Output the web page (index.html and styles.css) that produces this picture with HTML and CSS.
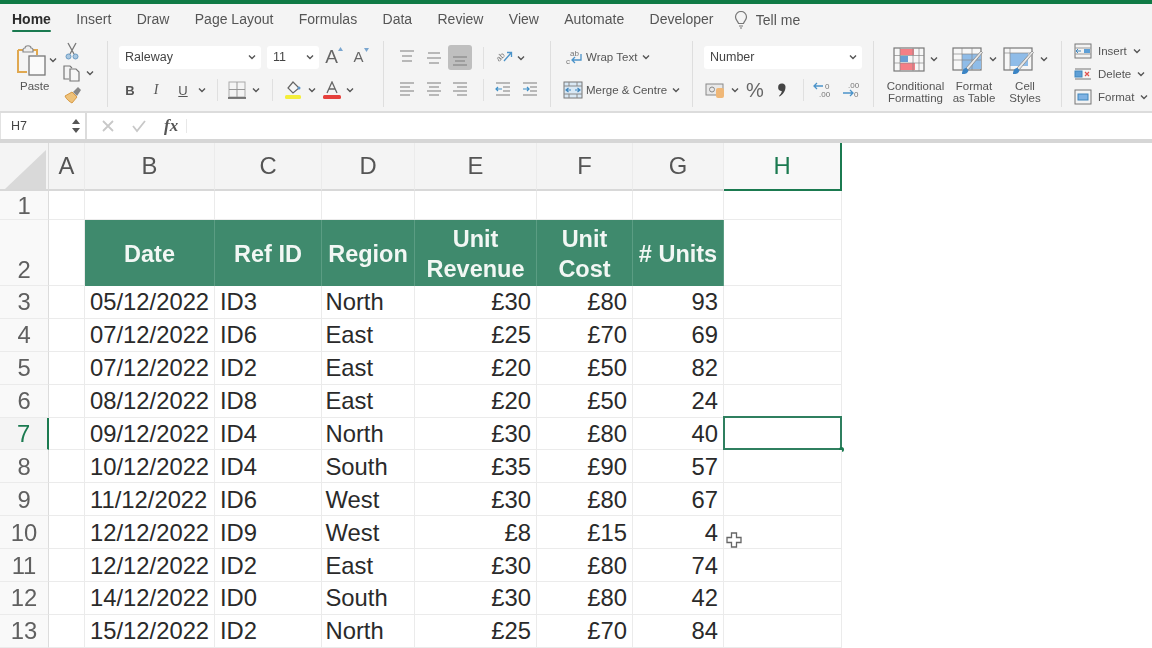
FILE: index.html
```html
<!DOCTYPE html>
<html lang="en">
<head>
<meta charset="utf-8">
<title>Excel</title>
<link rel="stylesheet" href="styles.css">
</head>
<body>
<svg class="defs" width="0" height="0" aria-hidden="true">
  <symbol id="c" viewBox="0 0 8 6"><path d="M1 1.500 4 4.500 7 1.500" fill="none" stroke="#555" stroke-width="1.400"/></symbol>
</svg>
<div class="app">
  <div class="topbar"></div>
  <nav class="tabs">
    <span class="tab active">Home</span><span class="tab">Insert</span><span class="tab">Draw</span><span class="tab">Page Layout</span><span class="tab">Formulas</span><span class="tab">Data</span><span class="tab">Review</span><span class="tab">View</span><span class="tab">Automate</span><span class="tab">Developer</span>
    <span class="tab tell"><svg width="14" height="18" viewBox="0 0 14 18"><path d="M4.500 12.500C4 10 1.500 9 1.500 6a5.500 5.500 0 0 1 11 0c0 3-2.500 4-3 6.500ZM5 15h4M6 17h2" fill="none" stroke="#777" stroke-width="1.200"/></svg>Tell me</span>
  </nav>

  <section class="ribbon">
    <div class="grp g1">
      <div class="paste">
        <div class="paste-icon">
          <svg width="32" height="32" viewBox="0 0 32 32"><path d="M3 6h5M18 6h4v5M3 6v22h9" fill="none" stroke="#e0a850" stroke-width="2"/><path d="M8 6c0-2 2-2 2-2 0-3 6-3 6 0 0 0 2 0 2 2v2H8Z" fill="#eee" stroke="#888" stroke-width="1.200"/><rect x="14" y="12" width="16" height="19" fill="#fafafa" stroke="#777" stroke-width="1.300"/></svg>
          <svg class="caret"><use href="#c"/></svg>
        </div>
        <span class="lbl">Paste</span>
      </div>
      <div class="tools">
        <svg width="14" height="18" viewBox="0 0 14 18"><path d="M3 1 9 12M11 1 5 12" stroke="#777" stroke-width="1.300"/><circle cx="3.500" cy="14.500" r="2.500" fill="#a9c7e0" stroke="#6a9cc4"/><circle cx="10.500" cy="14.500" r="2.500" fill="#a9c7e0" stroke="#6a9cc4"/></svg>
        <div class="tool-copy"><svg width="18" height="18" viewBox="0 0 18 18"><path d="M6 15H1V2h6l2 2" fill="none" stroke="#777" stroke-width="1.200"/><path d="M7 5h6l3 3v9H7Z" fill="#f6f6f6" stroke="#777" stroke-width="1.200"/></svg><svg class="caret"><use href="#c"/></svg></div>
        <svg width="18" height="18" viewBox="0 0 18 18"><path d="M1 10 8 6l5 5-5 6c-2-1-6-4-7-7Z" fill="#efc27a" stroke="#d79a45"/><path d="M9 6l5-5 3 3-4 6Z" fill="#888"/></svg>
      </div>
    </div>

    <div class="grp g2">
      <div class="row r-font">
        <div class="select">Raleway<svg class="caret"><use href="#c"/></svg></div>
        <div class="select">11<svg class="caret"><use href="#c"/></svg></div>
        <span class="grow big">A<svg width="5" height="4" viewBox="0 0 5 4"><path d="M0 4 2.500 0 5 4Z" fill="#7aa6cf"/></svg></span>
        <span class="grow">A<svg width="5" height="4" viewBox="0 0 5 4"><path d="M0 0 2.500 4 5 0Z" fill="#7aa6cf"/></svg></span>
      </div>
      <div class="row r-fmt">
        <b class="fmt">B</b><i class="fmt ital">I</i><u class="fmt">U</u><svg class="caret"><use href="#c"/></svg>
        <span class="vsep"></span>
        <svg width="18" height="18" viewBox="0 0 18 18"><rect x="1" y="1" width="16" height="15" fill="none" stroke="#aaa"/><path d="M9 1v15M1 8.500h16" stroke="#999"/><path d="M0 17h18" stroke="#555" stroke-width="1.500"/></svg>
        <svg class="caret"><use href="#c"/></svg>
        <span class="vsep"></span>
        <svg width="18" height="18" viewBox="0 0 18 18"><path d="M9 1 15 7 9 12 4 7Z" fill="#f5f5f5" stroke="#666" stroke-width="1.200"/><circle cx="15" cy="7" r="1.500" fill="#5e93c4"/><rect x="1" y="14" width="16" height="4" rx="1.500" fill="#f4ee3a"/></svg>
        <svg class="caret"><use href="#c"/></svg>
        <svg width="18" height="18" viewBox="0 0 18 18"><path d="M4 12 9 1l5 11M6 8h6" fill="none" stroke="#666" stroke-width="1.300"/><rect y="14" width="18" height="4" rx="1.500" fill="#e6403c"/></svg>
        <svg class="caret"><use href="#c"/></svg>
      </div>
    </div>

    <div class="grp g3">
      <div class="row r-al1">
        <svg class="lines"><path d="M1 2h14M3 7h10M3 12h10"/></svg>
        <svg class="lines"><path d="M2 4h12M1 9h14M3 14h10"/></svg>
        <span class="on"><svg class="lines"><path d="M1 8h14M3 12h10M1 16h14"/></svg></span>
        <span class="vsep"></span>
        <svg width="20" height="20" viewBox="0 0 20 20"><text class="mini" transform="rotate(-45 5 14)" x="5" y="14">ab</text><path d="M10 13 17 5M13 4.500h4.500V9" fill="none" stroke="#4b93c9" stroke-width="1.300"/></svg>
        <svg class="caret"><use href="#c"/></svg>
      </div>
      <div class="row r-al2">
        <svg class="lines"><path d="M1 2h14M1 6h10M1 10h14M1 14h10"/></svg>
        <svg class="lines"><path d="M1 2h14M3 6h10M1 10h14M3 14h10"/></svg>
        <svg class="lines"><path d="M1 2h14M5 6h10M1 10h14M5 14h10"/></svg>
        <span class="vsep"></span>
        <svg class="lines"><path d="M1 2h14M8 6h7M8 10h7M1 14h14"/><path class="blue" d="M7 8H1M3 6 1 8l2 2"/></svg>
        <svg class="lines"><path d="M1 2h14M8 6h7M8 10h7M1 14h14"/><path class="blue" d="M1 8h6M5 6l2 2-2 2"/></svg>
      </div>
    </div>

    <div class="grp g4">
      <div class="row r-text">
        <svg width="20" height="18" viewBox="0 0 20 18"><text x="7" y="8" class="mini">ab</text><text x="3" y="16" class="mini">c</text><path d="M18 6v6H9M12 9l-3 3 3 3" fill="none" stroke="#4b93c9" stroke-width="1.300"/></svg>
        <span class="lbl">Wrap Text</span><svg class="caret"><use href="#c"/></svg>
      </div>
      <div class="row r-text">
        <svg width="20" height="18" viewBox="0 0 20 18"><rect x="1" y="1" width="18" height="16" fill="#d9e8f4" stroke="#777"/><path d="M1 5h18M1 13h18M6 1v4M14 1v4M6 13v4M14 13v4" stroke="#888"/><path d="M3 9h5M17 9h-5M5.500 7 3 9l2.500 2M14.500 7 17 9l-2.500 2" fill="none" stroke="#3f86bd" stroke-width="1.200"/></svg>
        <span class="lbl">Merge &amp; Centre</span><svg class="caret"><use href="#c"/></svg>
      </div>
    </div>

    <div class="grp g5">
      <div class="row r-num1"><div class="select">Number<svg class="caret"><use href="#c"/></svg></div></div>
      <div class="row r-num2">
        <svg width="20" height="16" viewBox="0 0 20 16"><rect x="1" y="2" width="17" height="11" fill="#e8e8e8" stroke="#888"/><circle cx="7" cy="7.500" r="2.500" fill="none" stroke="#888"/><rect x="11" y="6" width="8" height="10" rx="2" fill="#efb777"/></svg>
        <svg class="caret"><use href="#c"/></svg>
        <span class="pct">%</span>
        <svg width="10" height="16" viewBox="0 0 10 16"><path d="M5 1.500a3.200 3.200 0 0 1 3.500 3.500C8.500 9 6 12.500 2.500 14.500L2 14c1.500-1.500 2.500-3 2.800-5A3.500 3.500 0 0 1 5 1.500Z" fill="#444"/></svg>
        <span class="vsep"></span>
        <svg width="20" height="18" viewBox="0 0 20 18"><text x="12" y="8" class="mini">0</text><text x="6" y="16" class="mini">.00</text><path d="M10 5H1M4 2 1 5l3 3" fill="none" stroke="#4b93c9" stroke-width="1.300"/></svg>
        <svg width="20" height="18" viewBox="0 0 20 18"><text x="7" y="7" class="mini">.00</text><text x="13" y="16" class="mini">0</text><path d="M2 12h10M9 9l3 3-3 3" fill="none" stroke="#4b93c9" stroke-width="1.300"/></svg>
      </div>
    </div>

    <div class="grp g6">
      <div class="big-btn w-cf">
        <div class="big-ic">
          <svg width="32" height="25" viewBox="0 0 32 25"><rect x="1" y="1" width="30" height="23" fill="#f7f7f7" stroke="#777" stroke-width="1.200"/><rect x="7" y="2" width="14" height="6" fill="#f47f86"/><rect x="7" y="9" width="8" height="6" fill="#6a9fd3"/><rect x="7" y="16" width="15" height="7" fill="#f47f86"/><path d="M1 8.500h30M1 16h30M7 1v23M20 1v23M26 1v23" stroke="#888" stroke-width=".7"/></svg>
          <svg class="caret"><use href="#c"/></svg>
        </div>
        <span class="lbl">Conditional<br>Formatting</span>
      </div>
      <div class="big-btn w-ft">
        <div class="big-ic">
          <svg width="32" height="28" viewBox="0 0 32 28"><rect x="1" y="1" width="28" height="22" fill="#f7f7f7" stroke="#777" stroke-width="1.200"/><rect x="10" y="7" width="19" height="15" fill="#8fbce8"/><path d="M1 7h28M1 13h28M10 1v22M20 1v22" stroke="#888" stroke-width=".7"/><path d="M14 21 29 4l1.500 1.500L16 23Z" fill="#e8e8e8" stroke="#888" stroke-width=".8"/><path d="M10 27c0-4 2-6 4.500-6l2 2.500c-1 3-3 3.500-6.500 3.500Z" fill="#3b84c4"/></svg>
          <svg class="caret"><use href="#c"/></svg>
        </div>
        <span class="lbl">Format<br>as Table</span>
      </div>
      <div class="big-btn w-cs">
        <div class="big-ic">
          <svg width="32" height="28" viewBox="0 0 32 28"><rect x="1" y="1" width="28" height="22" fill="#f7f7f7" stroke="#777" stroke-width="1.200"/><rect x="7" y="6" width="18" height="13" fill="#8fbce8"/><path d="M1 6h28M7 1v22" stroke="#888" stroke-width=".7"/><path d="M14 21 29 4l1.500 1.500L16 23Z" fill="#e8e8e8" stroke="#888" stroke-width=".8"/><path d="M10 27c0-4 2-6 4.500-6l2 2.500c-1 3-3 3.500-6.500 3.500Z" fill="#3b84c4"/></svg>
          <svg class="caret"><use href="#c"/></svg>
        </div>
        <span class="lbl">Cell<br>Styles</span>
      </div>
    </div>

    <div class="grp g7">
      <div class="cellop"><svg width="18" height="16" viewBox="0 0 18 16"><rect x="1" y="1" width="16" height="14" fill="#f3f3f3" stroke="#777"/><path d="M1 5h16M1 11h16" stroke="#999"/><rect x="10" y="6" width="6" height="4" fill="#5e9fd6"/><path d="M7 8H2M4 6 2 8l2 2" fill="none" stroke="#3f86bd"/></svg><span class="lbl">Insert</span><svg class="caret"><use href="#c"/></svg></div>
      <div class="cellop"><svg width="18" height="16" viewBox="0 0 18 16"><path d="M1 3h16M1 13h16" stroke="#777"/><rect x="1" y="5" width="7" height="6" fill="#5e9fd6" stroke="#3f86bd"/><path d="M11 6l4 4M15 6l-4 4" stroke="#e0524f" stroke-width="1.200"/></svg><span class="lbl">Delete</span><svg class="caret"><use href="#c"/></svg></div>
      <div class="cellop"><svg width="18" height="16" viewBox="0 0 18 16"><rect x="1" y="1" width="16" height="14" fill="#f3f3f3" stroke="#777"/><rect x="4" y="5" width="10" height="6" fill="#7fb2e3" stroke="#3f86bd"/></svg><span class="lbl">Format</span><svg class="caret"><use href="#c"/></svg></div>
    </div>
  </section>

  <section class="formula">
    <div class="namebox">H7<svg width="10" height="16" viewBox="0 0 10 16"><path d="M5 1 9 6H1ZM5 15 1 10h8Z" fill="#555"/></svg></div>
    <div class="fx-icons">
      <svg width="14" height="14" viewBox="0 0 14 14"><path d="M2 2 12 12M12 2 2 12" stroke="#c8c8c8" stroke-width="1.800"/></svg>
      <svg width="16" height="14" viewBox="0 0 16 14"><path d="M2 7 6 12 14 2" fill="none" stroke="#c8c8c8" stroke-width="1.800"/></svg>
      <span class="fx">fx</span>
      <span class="fx-sep"></span>
    </div>
  </section>

  <section class="sheet">
    <div class="corner"><svg width="48" height="48" viewBox="0 0 48 48"><path d="M5 46 46 7V46Z" fill="#d9d9d9"/></svg></div>
    <div class="ch">A</div><div class="ch">B</div><div class="ch">C</div><div class="ch">D</div><div class="ch">E</div><div class="ch">F</div><div class="ch">G</div><div class="ch ch-sel">H</div>

    <div class="rh">1</div><div class="c"></div><div class="c"></div><div class="c"></div><div class="c"></div><div class="c"></div><div class="c"></div><div class="c"></div><div class="c"></div>

    <div class="rh rh-low">2</div><div class="c"></div><div class="th">Date</div><div class="th">Ref ID</div><div class="th">Region</div><div class="th">Unit<br>Revenue</div><div class="th">Unit<br>Cost</div><div class="th"># Units</div><div class="c"></div>

    <div class="rh">3</div><div class="c"></div><div class="c">05/12/2022</div><div class="c">ID3</div><div class="c">North</div><div class="c n">£30</div><div class="c n">£80</div><div class="c n">93</div><div class="c"></div>
    <div class="rh">4</div><div class="c"></div><div class="c">07/12/2022</div><div class="c">ID6</div><div class="c">East</div><div class="c n">£25</div><div class="c n">£70</div><div class="c n">69</div><div class="c"></div>
    <div class="rh">5</div><div class="c"></div><div class="c">07/12/2022</div><div class="c">ID2</div><div class="c">East</div><div class="c n">£20</div><div class="c n">£50</div><div class="c n">82</div><div class="c"></div>
    <div class="rh">6</div><div class="c"></div><div class="c">08/12/2022</div><div class="c">ID8</div><div class="c">East</div><div class="c n">£20</div><div class="c n">£50</div><div class="c n">24</div><div class="c"></div>
    <div class="rh rh-sel">7</div><div class="c"></div><div class="c">09/12/2022</div><div class="c">ID4</div><div class="c">North</div><div class="c n">£30</div><div class="c n">£80</div><div class="c n">40</div><div class="c sel"><span class="handle"></span></div>
    <div class="rh">8</div><div class="c"></div><div class="c">10/12/2022</div><div class="c">ID4</div><div class="c">South</div><div class="c n">£35</div><div class="c n">£90</div><div class="c n">57</div><div class="c"></div>
    <div class="rh">9</div><div class="c"></div><div class="c">11/12/2022</div><div class="c">ID6</div><div class="c">West</div><div class="c n">£30</div><div class="c n">£80</div><div class="c n">67</div><div class="c"></div>
    <div class="rh">10</div><div class="c"></div><div class="c">12/12/2022</div><div class="c">ID9</div><div class="c">West</div><div class="c n">£8</div><div class="c n">£15</div><div class="c n">4</div><div class="c"></div>
    <div class="rh">11</div><div class="c"></div><div class="c">12/12/2022</div><div class="c">ID2</div><div class="c">East</div><div class="c n">£30</div><div class="c n">£80</div><div class="c n">74</div><div class="c"></div>
    <div class="rh">12</div><div class="c"></div><div class="c">14/12/2022</div><div class="c">ID0</div><div class="c">South</div><div class="c n">£30</div><div class="c n">£80</div><div class="c n">42</div><div class="c"></div>
    <div class="rh">13</div><div class="c"></div><div class="c">15/12/2022</div><div class="c">ID2</div><div class="c">North</div><div class="c n">£25</div><div class="c n">£70</div><div class="c n">84</div><div class="c"></div>

    <svg class="cursor" width="16" height="16" viewBox="0 0 16 16"><path d="M5.500 1h5v4.500H15v5h-4.500V15h-5v-4.500H1v-5h4.500Z" fill="#fff" stroke="#666" stroke-width="1.300"/></svg>
  </section>
</div>
</body>
</html>
```
FILE: styles.css
```css
* { box-sizing: border-box; }
html, body { margin: 0; height: 100%; overflow: hidden; background: #fff; }
body { font-family: "Liberation Sans", Arial, sans-serif; color: #222; }
.defs { position: absolute; }
.app { width: 1152px; height: 648px; display: flex; flex-direction: column; filter: blur(0.5px); overflow: hidden; }

.topbar { height: 4px; flex: none; background: #0f7a45; }

.tabs { height: 34px; flex: none; display: flex; gap: 25.400px; padding: 7px 0 0 12px; background: #f4f4f4; font-size: 14px; color: #555; align-items: flex-start; }
.tab { line-height: 16px; position: relative; white-space: nowrap; }
.tab.active { font-weight: 700; color: #2c2c2c; }
.tab.active::after { content: ""; position: absolute; left: 0; right: 0; top: 19px; height: 2px; border-radius: 1px; background: #1a7a50; }
.tell { display: flex; align-items: center; gap: 8px; margin-left: -5px; }

.ribbon { height: 75px; flex: none; display: flex; background: #f4f4f4; border-bottom: 2px solid #dcdcdc; filter: blur(0.3px); }
.grp { flex: none; height: 66px; margin-top: 3px; border-right: 1px solid #dedede; }
.g1 { width: 108px; display: flex; padding: 1px 0 0 15px; }
.g2, .g3, .g4, .g5 { padding-top: 4px; }
.g2 { width: 276px; }
.g3 { width: 167px; }
.g4 { width: 142px; }
.g5 { width: 181px; }
.g6 { width: 188px; display: flex; padding: 5px 0 0 12px; }
.g7 { width: 90px; border-right: 0; margin-top: 1px; }

.lbl { font-size: 11.500px; line-height: 12px; color: #555; white-space: nowrap; }
.caret { width: 8px; height: 6px; flex: none; display: block; }

.paste { width: 45px; display: flex; flex-direction: column; }
.paste-icon { display: flex; align-items: center; gap: 2px; height: 36px; }
.paste-icon svg:first-child { flex: none; }
.paste .lbl { margin: 2px 0 0 5px; }
.tools { display: flex; flex-direction: column; align-items: flex-start; padding-left: 5px; gap: 4px; }
.tool-copy { display: flex; align-items: center; gap: 5px; margin-left: -2px; }
.tools > svg:last-child { margin-left: -1px; }

.row { display: grid; height: 24px; align-items: center; justify-items: center; }
.row + .row { margin-top: 9px; }
.r-font { grid-template-columns: 142px 52px 18px 24px; column-gap: 6px; padding-left: 11px; }
.r-fmt { grid-template-columns: 24px 28px 26px 12px 18px 22px 16px 16px 26px 12px 28px 8px; padding-left: 10px; }
.r-al1 { grid-template-columns: 26px 27px 26px 20px 22px 12px; padding-left: 10px; }
.r-al2 { grid-template-columns: 26px 27px 26px 20px 20px 34px; padding-left: 10px; }
.r-num1 { padding-left: 11px; grid-template-columns: 158px; }
.r-num2 { grid-template-columns: 24px 16px 24px 30px 12px 28px 28px; padding-left: 10px; }
.r-text { display: flex; justify-content: flex-start; padding-left: 12px; gap: 3px; }
.r-text .caret { margin-left: 2px; }

.select { width: 100%; height: 23px; padding: 0 5px 0 6px; display: flex; align-items: center; justify-content: space-between; background: #fff; border-radius: 3px; font-size: 12.500px; color: #444; }
.grow { display: flex; align-items: flex-start; font-size: 15px; color: #666; line-height: 18px; }
.grow.big { font-size: 19px; line-height: 20px; }
.fmt { font-size: 13px; color: #555; text-decoration-thickness: 1px; }
.ital { font-family: "Liberation Serif", serif; font-size: 14px; }
.vsep { width: 1px; height: 22px; background: #e0e0e0; }
.lines { width: 16px; height: 18px; fill: none; stroke: #7d7d7d; stroke-width: 1.200; display: block; }
.lines .blue { stroke: #3f90c8; }
.on { width: 24px; height: 25px; display: flex; align-items: center; justify-content: center; background: #bfbfbf; border-radius: 3px; }
.mini { font-size: 8px; fill: #777; font-family: "Liberation Sans", sans-serif; }
.pct { font-size: 20px; line-height: 22px; color: #666; }

.big-btn { display: flex; flex-direction: column; align-items: center; text-align: center; }
.w-cf { width: 59px; }
.w-ft { width: 58px; }
.w-cs { width: 44px; }
.big-ic { height: 34px; display: flex; align-items: flex-start; gap: 5px; padding-top: 1px; }
.big-ic .caret { margin-top: 9px; }
.cellop { height: 23px; display: flex; align-items: center; padding-left: 12px; gap: 6px; }

.formula { height: 30px; flex: none; display: flex; background: #fff; border-bottom: 4px solid #d6d6d6; }
.namebox { width: 87px; height: 26px; display: flex; align-items: center; justify-content: space-between; padding: 0 4px 0 10px; font-size: 12.500px; color: #444; border-right: 2px solid #dcdcdc; border-left: 1px solid #e2e2e2; }
.fx-icons { display: flex; align-items: center; height: 26px; padding-left: 14px; gap: 16px; }
.fx { font-family: "Liberation Serif", serif; font-style: italic; font-weight: 700; font-size: 17px; color: #555; margin-left: 1px; }
.fx-sep { width: 1px; height: 14px; background: #e8e8e8; margin-left: -8px; }

.sheet { position: relative; flex: 1; min-height: 0; display: grid; grid-template-columns: 49px 36px 130px 107px 93px 122px 96px 91px 118px; grid-template-rows: 48px 29px 66px repeat(11, 32.900px); font-size: 23.800px; align-items: stretch; justify-content: start; }
.corner { background: #f4f4f4; border-right: 1px solid #dcdcdc; border-bottom: 2px solid #d8d8d8; display: block; line-height: 0; overflow: hidden; }
.ch { background: #f4f4f4; border-right: 1px solid #ebebeb; border-bottom: 2px solid #d8d8d8; display: flex; align-items: center; justify-content: center; color: #555; }
.ch-sel { background: #f8f8f8; color: #1b7a50; border-bottom: 2px solid #1b7a50; border-right: 2px solid #1b7a50; }
.rh { background: #f9f9f9; border-right: 1px solid #dcdcdc; border-bottom: 1px solid #ebebeb; display: flex; align-items: center; justify-content: center; color: #606060; padding-top: 1px; }
.rh-low { align-items: flex-end; padding: 0 0 1px; }
.rh-sel { color: #1b7a50; border-right: 2px solid #1b7a50; background: #f4f4f4; }
.c { background: #fff; border-right: 1px solid #ebebeb; border-bottom: 1px solid #ebebeb; display: flex; align-items: center; padding: 1px 5px 0 5px; color: #2a2a2a; white-space: nowrap; position: relative; }
.sheet .c:nth-child(9n+5) { padding-left: 3.500px; }
.n { justify-content: flex-end; }
.th { background: #3f8a6d; border-right: 1px solid #5b9d83; display: flex; align-items: center; justify-content: center; text-align: center; color: #f2f7f4; font-weight: 700; font-size: 23.500px; line-height: 30px; white-space: nowrap; padding-top: 1px; }
.sel { border: 2px solid #2f7f5f; margin: -2px 0 0 -1px; }
.handle { position: absolute; right: -3.500px; bottom: -3.500px; width: 5px; height: 5px; border-radius: 50%; background: #1b7a50; }
.cursor { position: absolute; left: 726px; top: 389px; }
```
